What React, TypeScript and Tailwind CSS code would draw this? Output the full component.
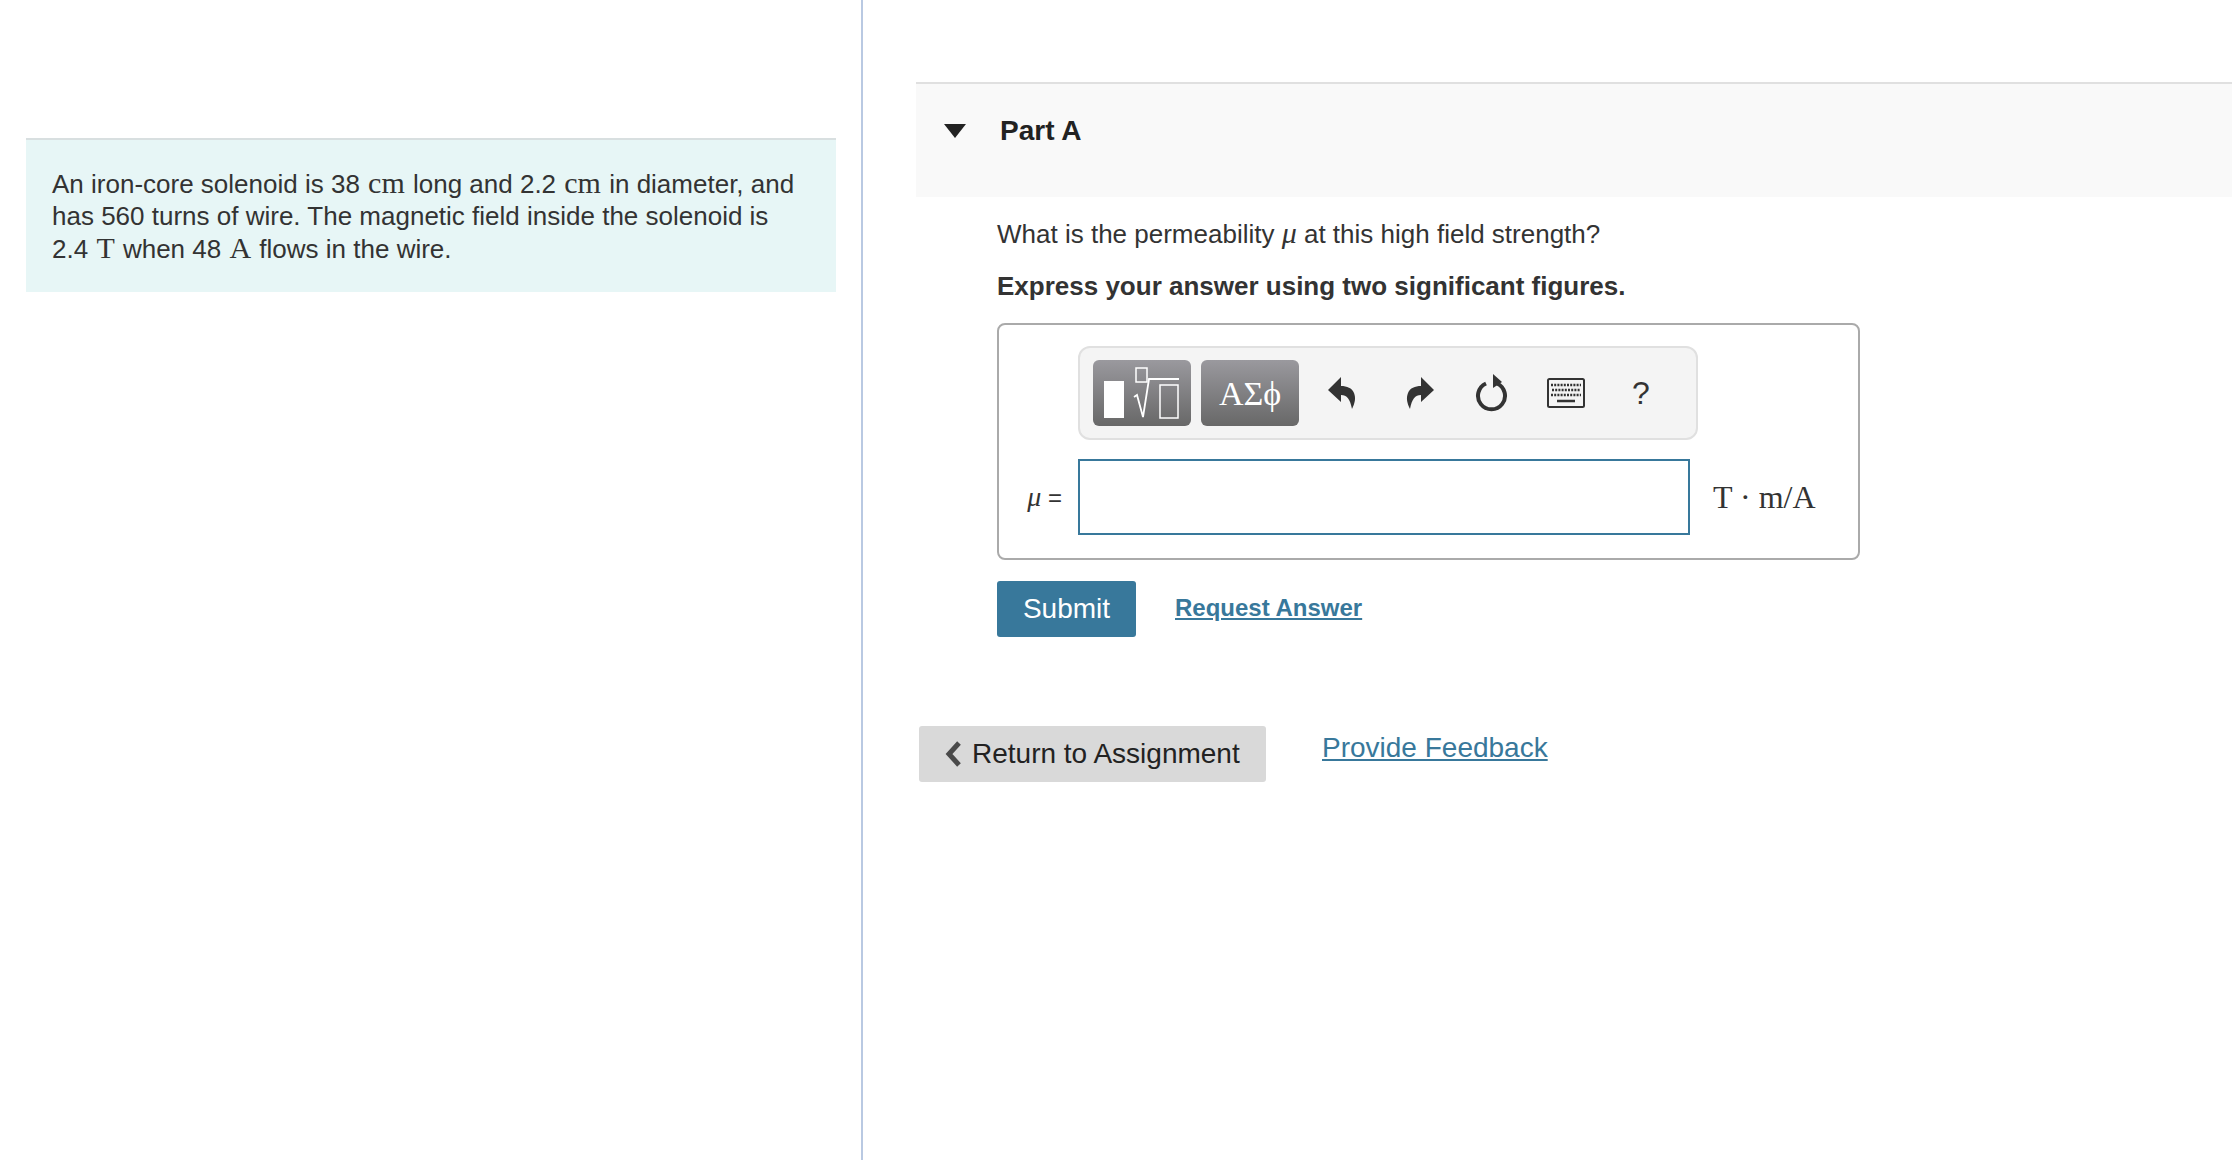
const serif = "font-['Liberation_Serif',serif]";

function RadicalIcon() {
  return (
    <svg width="76" height="54" viewBox="0 0 76 54" fill="none" stroke="white">
      <rect x="0" y="15" width="20" height="37" fill="white" stroke="none" />
      <rect x="32" y="2" width="11" height="14" strokeWidth="1.5" />
      <path d="M30 31l3-2 6 22 6-38h30" strokeWidth="1.8" />
      <rect x="56" y="19" width="18" height="33" strokeWidth="1.5" />
    </svg>
  );
}

function UndoIcon({ flip }: { flip?: boolean }) {
  return (
    <svg width="28" height="34" viewBox="0 0 28 34" className={flip ? "-scale-x-100" : ""}>
      <path d="M13 1L0 14l13 12v-7c6 0 9 4 11 14 3-6 4-11 2-16-2-5-7-7-13-7z" fill="#333" />
    </svg>
  );
}

function ResetIcon() {
  return (
    <svg width="34" height="38" viewBox="0 0 34 38" fill="none">
      <path d="M11 9.5a13.5 13.5 0 1 0 11 0" stroke="#333" strokeWidth="4" />
      <path d="M18 0l9 8-9 6z" fill="#333" />
    </svg>
  );
}

function KeyboardIcon() {
  return (
    <svg width="38" height="30" viewBox="0 0 38 30">
      <rect x="1" y="1" width="36" height="28" rx="1.5" fill="#f4f4f4" stroke="#333" strokeWidth="2" />
      <path d="M4 7h30" stroke="#333" strokeWidth="2.5" strokeDasharray="2 1.2" />
      <path d="M5 12h28" stroke="#333" strokeWidth="2.5" strokeDasharray="2 1.2" />
      <path d="M4 17h30" stroke="#333" strokeWidth="2.5" strokeDasharray="2 1.2" />
      <path d="M10 23h18" stroke="#333" strokeWidth="2.5" />
    </svg>
  );
}

function Unit({ children }: { children: string }) {
  return <span className={`${serif} text-[30px] mx-[1px]`}>{children}</span>;
}

function ToolbarSlot({ children, className }: { children: React.ReactNode; className: string }) {
  return <div className={`flex justify-center items-center ${className}`}>{children}</div>;
}

export default function App() {
  return (
    <div className="flex h-[1160px] bg-white text-[#333] font-['Liberation_Sans',sans-serif] overflow-hidden">
      <div className="w-[863px] shrink-0 border-r-2 border-[#b9c9e2] pt-[138px] pl-[26px] pr-[25px]">
        <div className="border-t-2 border-[#d8dfe0] bg-[#e7f6f6] pl-[26px] pr-[26px] pt-[27px] pb-[27px] text-[26px] leading-[32px]">
          An iron-core solenoid is 38 <Unit>cm</Unit> long and 2.2 <Unit>cm</Unit> in diameter, and has 560 turns of wire. The magnetic field inside the solenoid is 2.4 <Unit>T</Unit> when 48 <Unit>A</Unit> flows in the wire.
        </div>
      </div>

      <div className="flex-1 min-w-0 pt-[82px] pl-[53px]">
        <div className="h-[115px] border-t-2 border-[#e0e0e0] bg-[#f9f9f9] flex items-start pt-[29px] pl-[28px]">
          <svg width="22" height="14" viewBox="0 0 22 14" className="mt-[11px]">
            <path d="M0 0h22L11 14z" fill="#222" />
          </svg>
          <span className="ml-[34px] text-[28px] leading-[36px] font-bold text-[#222]">Part A</span>
        </div>

        <div className="pl-[81px]">
          <p className="mt-[20px] text-[26px] leading-[32px]">
            What is the permeability <i className={`${serif} text-[30px]`}>μ</i> at this high field strength?
          </p>
          <p className="mt-[20px] text-[26px] leading-[32px] font-bold">Express your answer using two significant figures.</p>

          <div className="mt-[21px] w-[863px] border-2 border-[#aaa] rounded-[8px] pt-[21px] pb-[23px]">
            <div className="ml-[79px] w-[620px] h-[94px] border-2 border-[#e0e0e0] rounded-[12px] bg-[#f4f4f4] flex items-center pl-[13px]">
              <div className="w-[98px] h-[66px] rounded-[6px] bg-linear-to-b from-[#9a999e] to-[#686868] flex items-center justify-center">
                <RadicalIcon />
              </div>
              <div className={`ml-[10px] w-[98px] h-[66px] rounded-[6px] bg-linear-to-b from-[#9a999e] to-[#686868] flex items-center justify-center text-white text-[34px] ${serif}`}>
                ΑΣϕ
              </div>
              <ToolbarSlot className="ml-[8px] w-[70px]"><UndoIcon /></ToolbarSlot>
              <ToolbarSlot className="ml-[8px] w-[70px]"><UndoIcon flip /></ToolbarSlot>
              <ToolbarSlot className="w-[74px]"><ResetIcon /></ToolbarSlot>
              <ToolbarSlot className="w-[74px]"><KeyboardIcon /></ToolbarSlot>
              <ToolbarSlot className="w-[76px] text-[32px]">?</ToolbarSlot>
            </div>

            <div className="mt-[19px] flex items-center">
              <div className="w-[79px] pr-[16px] text-right text-[24px] whitespace-nowrap">
                <i className={`${serif} text-[28px]`}>μ</i> =
              </div>
              <div className="w-[612px] h-[76px] border-2 border-[#38789b] bg-white" />
              <div className={`ml-[23px] text-[32px] whitespace-nowrap ${serif}`}>T · m/A</div>
            </div>
          </div>

          <div className="mt-[21px] flex items-start">
            <button className="w-[139px] h-[56px] rounded-[3px] bg-[#38789b] text-white text-[28px]">Submit</button>
            <a className="ml-[39px] mt-[11px] text-[24px] leading-[32px] font-bold text-[#38789b] underline">Request Answer</a>
          </div>
        </div>

        <div className="mt-[89px] ml-[3px] flex items-start">
          <button className="w-[347px] h-[56px] rounded-[3px] bg-[#d9d9d9] text-[28px] text-[#222] flex items-center pl-[26px]">
            <svg width="17" height="26" viewBox="0 0 17 26" className="mr-[10px]">
              <path d="M14 2L4 13l10 11" fill="none" stroke="#4a4a4a" strokeWidth="5" />
            </svg>
            Return to Assignment
          </button>
          <a className="ml-[56px] mt-[4px] text-[28px] leading-[36px] text-[#38789b] underline">Provide Feedback</a>
        </div>
      </div>
    </div>
  );
}
